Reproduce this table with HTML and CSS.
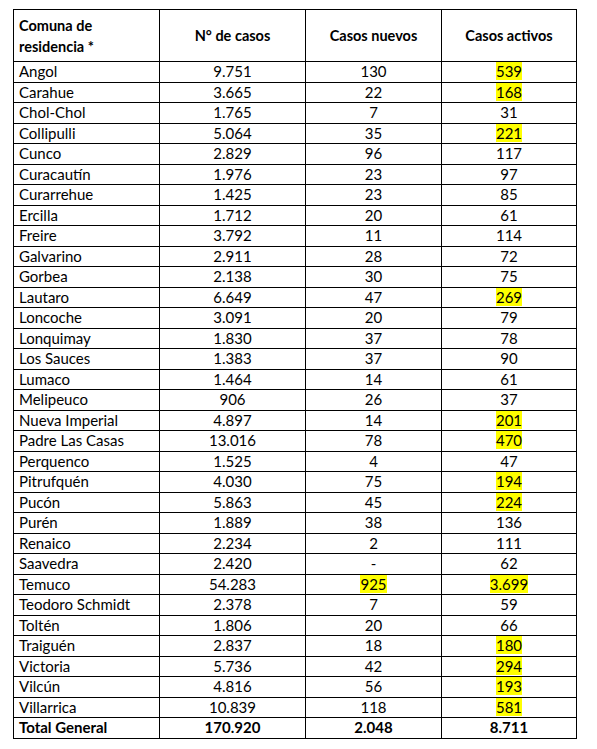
FILE: index.html
```html
<!DOCTYPE html>
<html lang="es">
<head>
<meta charset="utf-8">
<title>Casos por comuna</title>
<link rel="stylesheet" href="styles.css">
</head>
<body>
<table class="casos">
  <colgroup>
    <col class="c1"><col class="c2"><col class="c3"><col class="c4">
  </colgroup>
  <thead>
    <tr>
      <th class="left">Comuna de<br>residencia *</th>
      <th>N° de casos</th>
      <th>Casos nuevos</th>
      <th>Casos activos</th>
    </tr>
  </thead>
  <tbody>
    <tr><td class="left">Angol</td><td>9.751</td><td>130</td><td><span class="hl">539</span></td></tr>
    <tr><td class="left">Carahue</td><td>3.665</td><td>22</td><td><span class="hl">168</span></td></tr>
    <tr><td class="left">Chol-Chol</td><td>1.765</td><td>7</td><td>31</td></tr>
    <tr><td class="left">Collipulli</td><td>5.064</td><td>35</td><td><span class="hl">221</span></td></tr>
    <tr><td class="left">Cunco</td><td>2.829</td><td>96</td><td>117</td></tr>
    <tr><td class="left">Curacautín</td><td>1.976</td><td>23</td><td>97</td></tr>
    <tr><td class="left">Curarrehue</td><td>1.425</td><td>23</td><td>85</td></tr>
    <tr><td class="left">Ercilla</td><td>1.712</td><td>20</td><td>61</td></tr>
    <tr><td class="left">Freire</td><td>3.792</td><td>11</td><td>114</td></tr>
    <tr><td class="left">Galvarino</td><td>2.911</td><td>28</td><td>72</td></tr>
    <tr><td class="left">Gorbea</td><td>2.138</td><td>30</td><td>75</td></tr>
    <tr><td class="left">Lautaro</td><td>6.649</td><td>47</td><td><span class="hl">269</span></td></tr>
    <tr><td class="left">Loncoche</td><td>3.091</td><td>20</td><td>79</td></tr>
    <tr><td class="left">Lonquimay</td><td>1.830</td><td>37</td><td>78</td></tr>
    <tr><td class="left">Los Sauces</td><td>1.383</td><td>37</td><td>90</td></tr>
    <tr><td class="left">Lumaco</td><td>1.464</td><td>14</td><td>61</td></tr>
    <tr><td class="left">Melipeuco</td><td>906</td><td>26</td><td>37</td></tr>
    <tr><td class="left">Nueva Imperial</td><td>4.897</td><td>14</td><td><span class="hl">201</span></td></tr>
    <tr><td class="left">Padre Las Casas</td><td>13.016</td><td>78</td><td><span class="hl">470</span></td></tr>
    <tr><td class="left">Perquenco</td><td>1.525</td><td>4</td><td>47</td></tr>
    <tr><td class="left">Pitrufquén</td><td>4.030</td><td>75</td><td><span class="hl">194</span></td></tr>
    <tr><td class="left">Pucón</td><td>5.863</td><td>45</td><td><span class="hl">224</span></td></tr>
    <tr><td class="left">Purén</td><td>1.889</td><td>38</td><td>136</td></tr>
    <tr><td class="left">Renaico</td><td>2.234</td><td>2</td><td>111</td></tr>
    <tr><td class="left">Saavedra</td><td>2.420</td><td>-</td><td>62</td></tr>
    <tr><td class="left">Temuco</td><td>54.283</td><td><span class="hl">925</span></td><td><span class="hl">3.699</span></td></tr>
    <tr><td class="left">Teodoro Schmidt</td><td>2.378</td><td>7</td><td>59</td></tr>
    <tr><td class="left">Toltén</td><td>1.806</td><td>20</td><td>66</td></tr>
    <tr><td class="left">Traiguén</td><td>2.837</td><td>18</td><td><span class="hl">180</span></td></tr>
    <tr><td class="left">Victoria</td><td>5.736</td><td>42</td><td><span class="hl">294</span></td></tr>
    <tr><td class="left">Vilcún</td><td>4.816</td><td>56</td><td><span class="hl">193</span></td></tr>
    <tr><td class="left">Villarrica</td><td>10.839</td><td>118</td><td><span class="hl">581</span></td></tr>
    <tr class="total"><td class="left">Total General</td><td>170.920</td><td>2.048</td><td>8.711</td></tr>
  </tbody>
</table>
</body>
</html>
```
FILE: styles.css
```css
html, body {
  margin: 0;
  background: #ffffff;
}
body {
  padding: 9px 0 0 13px;
  font-family: Lato, "Liberation Sans", sans-serif;
  font-size: 15px;
  color: #000000;
}
.casos {
  border-collapse: collapse;
  table-layout: fixed;
  width: 563px;
}
.c1 { width: 146px; }
.c2 { width: 146px; }
.c3 { width: 136px; }
.c4 { width: 135px; }
.casos th,
.casos td {
  border: 1px solid #000000;
  padding: 0 4px;
  text-align: center;
  vertical-align: middle;
  line-height: 17px;
}
.casos th {
  height: 51px;
  font-weight: 700;
  font-size: 14.5px;
  line-height: 21px;
}
.casos td {
  height: 19.5px;
}
.casos .left {
  text-align: left;
  padding-left: 5px;
}
.hl {
  background: #ffff00;
}
.total td {
  font-weight: 700;
}
```
